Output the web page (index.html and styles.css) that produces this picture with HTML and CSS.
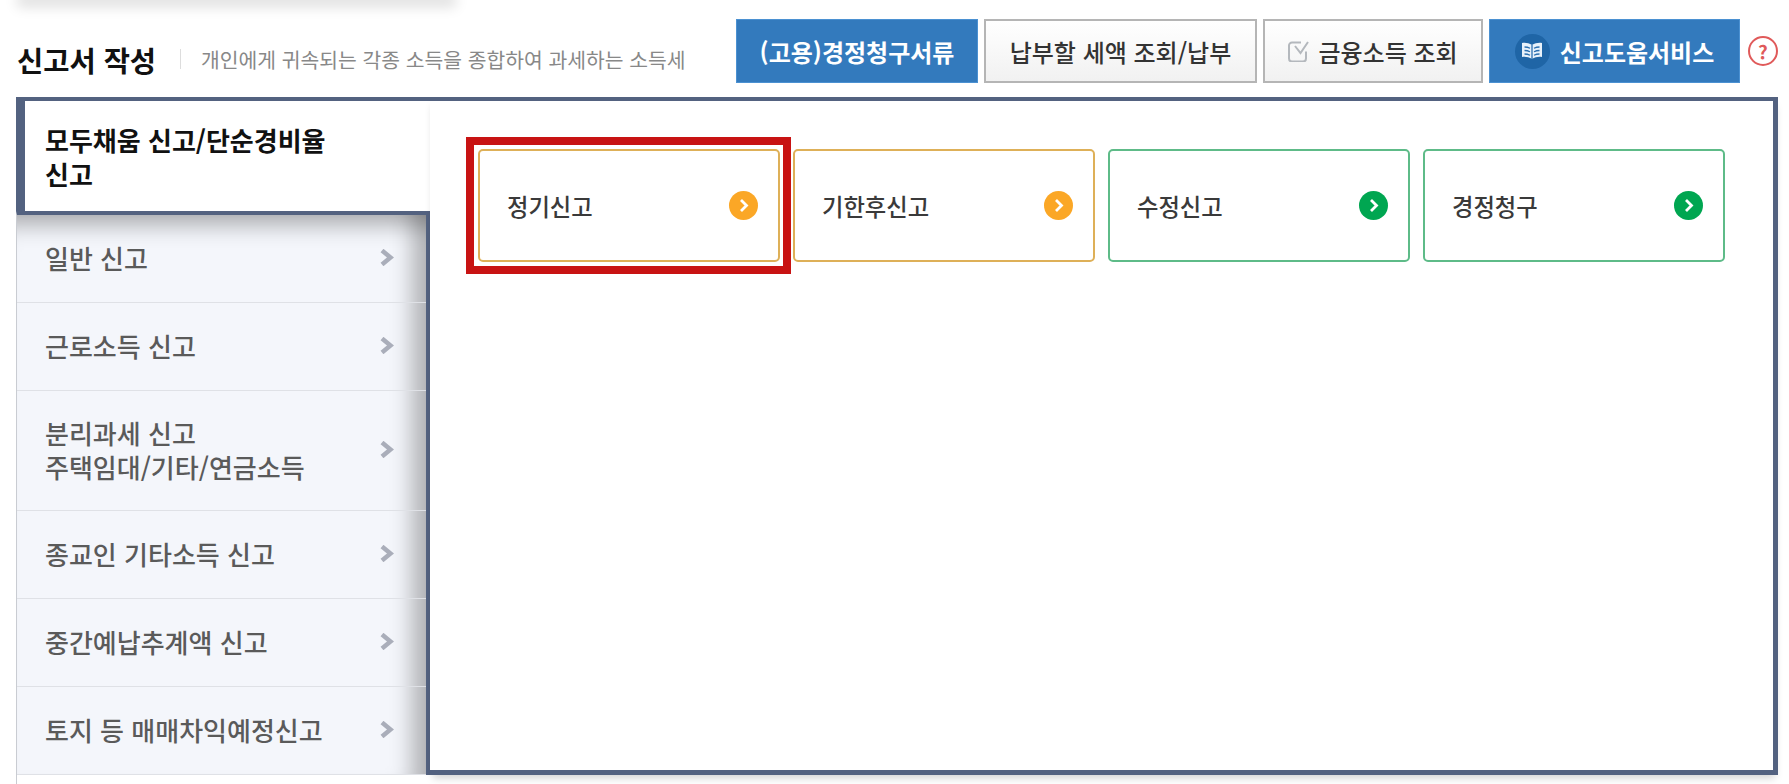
FILE: index.html
```html
<!DOCTYPE html>
<html lang="ko">
<head>
    <meta charset="UTF-8">
    <title>신고서 작성</title>
    <link rel="stylesheet" href="styles.css">
</head>
<body>
<div class="top-shade"></div>
<div class="page">
    <div class="header">
        <h1 class="title">신고서 작성</h1>
        <p class="desc">개인에게 귀속되는 각종 소득을 종합하여 과세하는 소득세</p>
        <div class="actions">
            <a class="btn blue w1">(고용)경정청구서류</a>
            <a class="btn plain w2">납부할 세액 조회/납부</a>
            <a class="btn plain w3">
                <svg class="check" viewBox="0 0 22 21" width="22" height="21">
                    <path d="M13 1.500H4a3 3 0 0 0-3 3v13a3 3 0 0 0 3 3h11a3 3 0 0 0 3-3v-7" fill="none" stroke="#b4b8bd" stroke-width="2"/>
                    <path d="M7 5l5.500 7L20 1" fill="none" stroke="#b4b8bd" stroke-width="2"/>
                </svg>
                금융소득 조회
            </a>
            <a class="btn blue w4">
                <span class="book">
                    <svg viewBox="0 0 22 20" width="22" height="20">
                        <path d="M11 4C8 2 4 1.500 1 2v14c3-.5 7 0 10 2 3-2 7-2.500 10-2V2c-3-.5-7 0-10 2z" fill="#e8f1fa"/>
                        <path d="M11 4v14M3.500 6c2 0 4 .5 5.500 1.300M3.500 9.500c2 0 4 .5 5.500 1.300M3.500 13c2 0 4 .5 5.500 1.300M18.500 6c-2 0-4 .5-5.500 1.300M18.500 9.500c-2 0-4 .5-5.500 1.300M18.500 13c-2 0-4 .5-5.500 1.300" fill="none" stroke="#2a6fb0" stroke-width="1.300"/>
                    </svg>
                </span>
                신고도움서비스
            </a>
            <span class="help">?</span>
        </div>
    </div>

    <div class="panel">
        <div class="sidebar">
            <div class="tab">모두채움 신고/단순경비율 신고</div>
            <ul class="list">
                <li class="item">
                    <span>일반 신고</span>
                    <svg class="arrow" viewBox="0 0 14 17" width="14" height="17"><path d="M2 1.500L10.500 8.500 2 15.500" fill="none" stroke="#aaaeba" stroke-width="4.500"/></svg>
                </li>
                <li class="item">
                    <span>근로소득 신고</span>
                    <svg class="arrow" viewBox="0 0 14 17" width="14" height="17"><path d="M2 1.500L10.500 8.500 2 15.500" fill="none" stroke="#aaaeba" stroke-width="4.500"/></svg>
                </li>
                <li class="item tall">
                    <span>분리과세 신고<br>주택임대/기타/연금소득</span>
                    <svg class="arrow" viewBox="0 0 14 17" width="14" height="17"><path d="M2 1.500L10.500 8.500 2 15.500" fill="none" stroke="#aaaeba" stroke-width="4.500"/></svg>
                </li>
                <li class="item">
                    <span>종교인 기타소득 신고</span>
                    <svg class="arrow" viewBox="0 0 14 17" width="14" height="17"><path d="M2 1.500L10.500 8.500 2 15.500" fill="none" stroke="#aaaeba" stroke-width="4.500"/></svg>
                </li>
                <li class="item">
                    <span>중간예납추계액 신고</span>
                    <svg class="arrow" viewBox="0 0 14 17" width="14" height="17"><path d="M2 1.500L10.500 8.500 2 15.500" fill="none" stroke="#aaaeba" stroke-width="4.500"/></svg>
                </li>
                <li class="item">
                    <span>토지 등 매매차익예정신고</span>
                    <svg class="arrow" viewBox="0 0 14 17" width="14" height="17"><path d="M2 1.500L10.500 8.500 2 15.500" fill="none" stroke="#aaaeba" stroke-width="4.500"/></svg>
                </li>
            </ul>
            <div class="sidebar-rest"></div>
        </div>

        <div class="content">
            <a class="card orange marked">
                <span>정기신고</span>
                <span class="go"><svg viewBox="0 0 29 29" width="29" height="29"><path d="M12 9l5.500 5.500L12 20" fill="none" stroke="#fff" stroke-width="2.800"/></svg></span>
            </a>
            <a class="card orange">
                <span>기한후신고</span>
                <span class="go"><svg viewBox="0 0 29 29" width="29" height="29"><path d="M12 9l5.500 5.500L12 20" fill="none" stroke="#fff" stroke-width="2.800"/></svg></span>
            </a>
            <a class="card green">
                <span>수정신고</span>
                <span class="go"><svg viewBox="0 0 29 29" width="29" height="29"><path d="M12 9l5.500 5.500L12 20" fill="none" stroke="#fff" stroke-width="2.800"/></svg></span>
            </a>
            <a class="card green">
                <span>경정청구</span>
                <span class="go"><svg viewBox="0 0 29 29" width="29" height="29"><path d="M12 9l5.500 5.500L12 20" fill="none" stroke="#fff" stroke-width="2.800"/></svg></span>
            </a>
        </div>
    </div>
</div>
</body>
</html>
```

FILE: styles.css
```css
* {
    margin: 0;
    padding: 0;
    box-sizing: border-box;
}
html, body {
    height: 784px;
    overflow: hidden;
}
body {
    background: #fff;
    font-family: "Noto Sans CJK KR", "Noto Sans", sans-serif;
    color: #333;
}
ul {
    list-style: none;
}
.top-shade {
    width: 425px;
    height: 0;
    margin-left: 24px;
    box-shadow: 0 0 13px 7px rgba(0, 0, 0, .13);
}
.page {
    width: 1778px;
    padding-left: 16px;
}

/* header */
.header {
    display: flex;
    align-items: center;
    height: 97px;
    padding: 19px 0 14px 1px;
}
.title {
    margin-top: 18px;
    font-size: 28.500px;
    font-weight: 700;
    color: #111;
    line-height: 40px;
    white-space: nowrap;
}
.desc {
    margin: 15px 0 0 24px;
    padding-left: 20px;
    border-left: 1px solid #ddd;
    font-size: 20.400px;
    line-height: 20px;
    color: #888;
    white-space: nowrap;
}
.actions {
    display: flex;
    align-items: center;
    margin-left: auto;
    gap: 6px;
}
.btn {
    display: flex;
    align-items: center;
    justify-content: center;
    height: 64px;
    font-size: 24px;
    font-weight: 500;
}
.btn.blue {
    background: #337abd;
    border: 1px solid #4b91d2;
    color: #fff;
    font-weight: 700;
}
.btn.plain {
    background: linear-gradient(#fff, #f1f1f1);
    border: 2px solid #b5b5b5;
    color: #333;
}
.w1 { width: 242px; }
.w2 { width: 273px; }
.w3 { width: 220px; }
.w4 { width: 251px; }
.check {
    margin-right: 8px;
}
.book {
    display: flex;
    align-items: center;
    justify-content: center;
    width: 35px;
    height: 35px;
    margin-right: 10px;
    border-radius: 50%;
    background: #1f65a6;
}
.help {
    width: 30px;
    height: 30px;
    margin-left: 2px;
    border: 2px solid #e05a5a;
    border-radius: 50%;
    color: #e05a5a;
    font-size: 19px;
    font-weight: 700;
    line-height: 25px;
    text-align: center;
}

/* panel */
.panel {
    display: flex;
    height: 687px;
}
.sidebar {
    display: flex;
    flex-direction: column;
    width: 414px;
    height: 687px;
    flex-shrink: 0;
}
.tab {
    display: flex;
    align-items: center;
    height: 114px;
    padding: 1px 75px 0 20px;
    border-top: 4px solid #536280;
    border-left: 9px solid #536280;
    background: #fff;
    color: #111;
    font-size: 26px;
    font-weight: 700;
    line-height: 34px;
}
.list {
    height: 564px;
    flex-shrink: 0;
    border-top: 4px solid #536280;
    border-right: 4px solid #536280;
    border-left: 1px solid #c9ccd2;
    background: #f4f6fb;
    box-shadow: inset -32px 0 22px -18px rgba(0, 0, 0, .28), inset 0 30px 22px -20px rgba(0, 0, 0, .3);
}
.item {
    display: flex;
    align-items: center;
    justify-content: space-between;
    height: 88px;
    padding: 0 32px 2px 28px;
    border-bottom: 1px solid #dfe1e6;
    color: #5a5a5a;
    font-size: 26px;
    font-weight: 500;
    line-height: 34px;
}
.item.tall {
    height: 120px;
}
.sidebar-rest {
    flex: 1;
    border-left: 1px solid #c9ccd2;
}

/* content */
.content {
    display: flex;
    align-items: flex-start;
    gap: 13.500px;
    flex: 1;
    height: 678px;
    padding: 48px 0 0 48px;
    border-top: 4px solid #536280;
    border-right: 5px solid #536280;
    border-bottom: 5px solid #536280;
    background: #fff;
    box-shadow: 0 6px 8px -3px rgba(0, 0, 0, .18);
}
.card {
    position: relative;
    display: flex;
    align-items: center;
    justify-content: space-between;
    width: 301.500px;
    height: 113px;
    padding: 0 20px 0 27px;
    border: 2px solid;
    border-radius: 5px;
    color: #3a3a3a;
    font-size: 23.300px;
    font-weight: 500;
}
.card.orange {
    border-color: #deb058;
}
.card.green {
    border-color: #5ebb88;
}
.go {
    display: block;
    width: 29px;
    height: 29px;
    border-radius: 50%;
}
.go svg {
    display: block;
}
.orange .go {
    background: #fba726;
}
.green .go {
    background: #00a651;
}
/* red annotation box around the first card */
.marked::after {
    content: "";
    position: absolute;
    top: -14px;
    right: -13px;
    bottom: -14px;
    left: -14px;
    border: 8px solid #c81313;
}
```
